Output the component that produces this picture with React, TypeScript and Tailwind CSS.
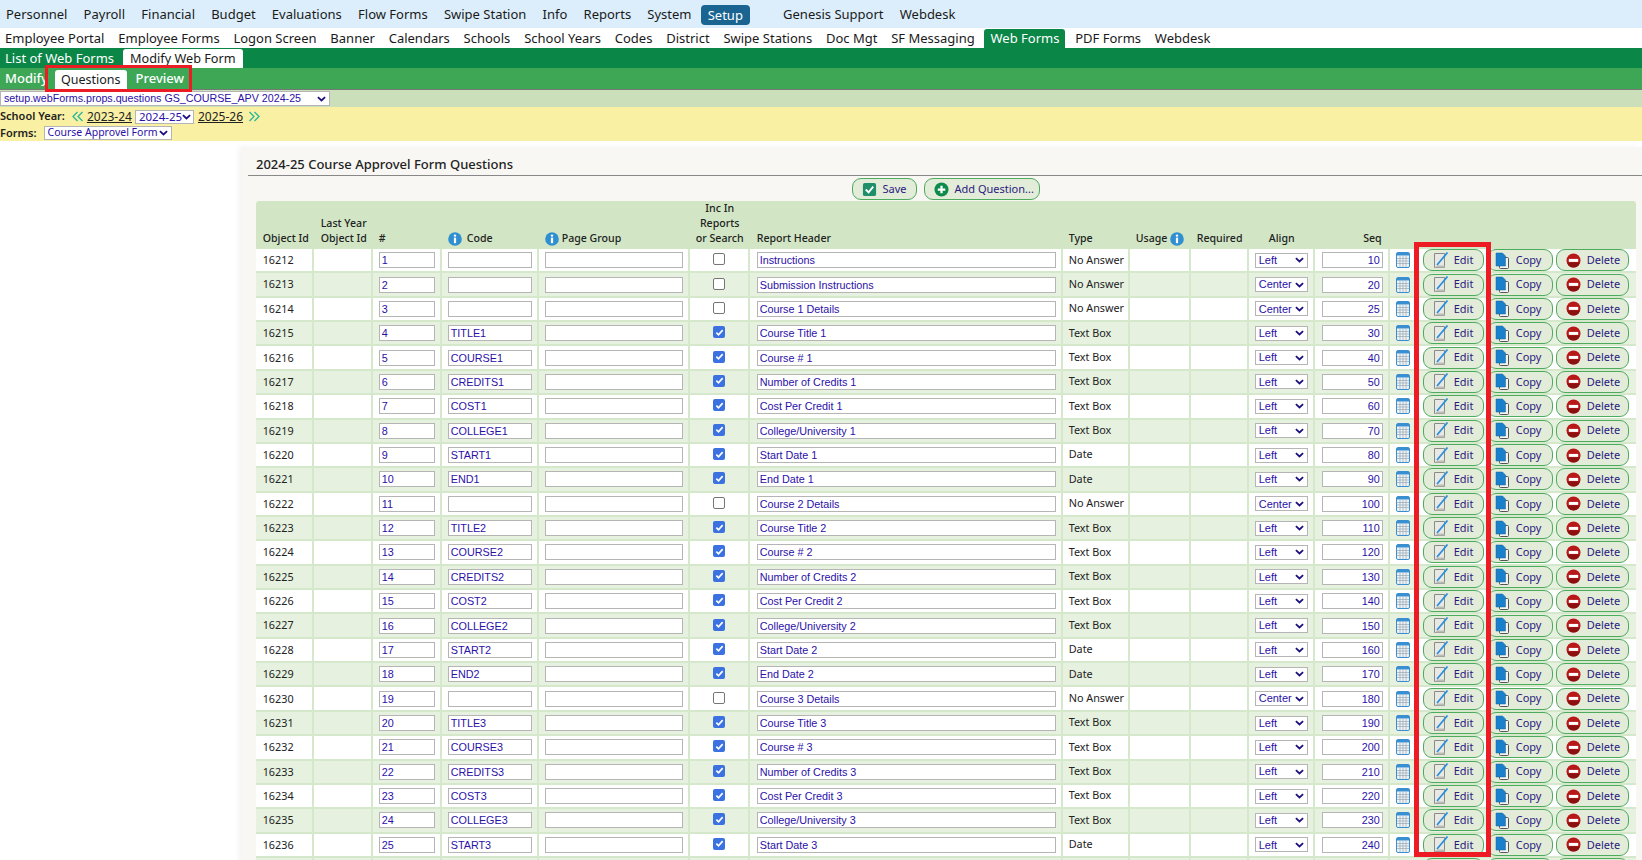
const NAV1 = ["Personnel", "Payroll", "Financial", "Budget", "Evaluations", "Flow Forms", "Swipe Station", "Info", "Reports", "System"];
const NAV2 = ["Employee Portal", "Employee Forms", "Logon Screen", "Banner", "Calendars", "Schools", "School Years", "Codes", "District", "Swipe Stations", "Doc Mgt", "SF Messaging"];

type Row = { id: number; n: number; code: string; header: string; type: string; align: string; seq: number; checked: boolean };

const base = [
  { code: "TITLE", header: "Course Title", type: "Text Box" },
  { code: "COURSE", header: "Course #", type: "Text Box" },
  { code: "CREDITS", header: "Number of Credits", type: "Text Box" },
  { code: "COST", header: "Cost Per Credit", type: "Text Box" },
  { code: "COLLEGE", header: "College/University", type: "Text Box" },
  { code: "START", header: "Start Date", type: "Date" },
  { code: "END", header: "End Date", type: "Date" },
];

const rows: Row[] = [];
const seqs = [10, 20, 25, 30, 40, 50, 60, 70, 80, 90, 100, 110, 120, 130, 140, 150, 160, 170, 180, 190, 200, 210, 220, 230, 240, 250];
const push = (code: string, header: string, type: string, align: string, checked: boolean) => {
  const i = rows.length;
  rows.push({ id: 16212 + i, n: i + 1, code, header, type, align, seq: seqs[i], checked });
};
push("", "Instructions", "No Answer", "Left", false);
push("", "Submission Instructions", "No Answer", "Center", false);
[1, 2, 3].forEach((c) => {
  push("", `Course ${c} Details`, "No Answer", "Center", false);
  base.forEach((b) => push(`${b.code}${c}`, `${b.header} ${c}`, b.type, "Left", true));
});

function InfoIcon() {
  return (
    <svg viewBox="0 0 14 14" className="w-[14px] h-[14px] shrink-0">
      <circle cx="7" cy="7" r="6.8" fill="#2f8fd0" />
      <circle cx="7" cy="3.6" r="1.2" fill="#fff" />
      <rect x="5.9" y="5.6" width="2.2" height="5.6" fill="#fff" />
    </svg>
  );
}

function CalendarIcon() {
  return (
    <svg viewBox="0 0 14 16" className="w-[14px] h-[16px]">
      <rect x="0.5" y="0.5" width="13" height="15" rx="1.5" fill="#eef3f8" stroke="#3a8fd0" />
      <rect x="1" y="1" width="12" height="2.5" fill="#3a8fd0" />
      <path d="M1 6.5h12M1 9h12M1 11.5h12M4 4v11M7 4v11M10 4v11" stroke="#9aa6b2" strokeWidth="0.7" />
    </svg>
  );
}

function EditIcon() {
  return (
    <svg viewBox="0 0 16 17" className="w-[16px] h-[17px] shrink-0">
      <path d="M1.5 1.5h10v14h-10z" fill="#e9e9e4" stroke="#8a8a8a" />
      <path d="M1.5 15.5l3-2h7v2z" fill="#bdbdb8" />
      <path d="M4 13L14.5 0.5" stroke="#2b8fdc" strokeWidth="1.8" />
    </svg>
  );
}

function CopyIcon() {
  return (
    <svg viewBox="0 0 16 17" className="w-[16px] h-[17px] shrink-0">
      <rect x="5.5" y="5.5" width="9" height="11" rx="1" fill="#f4f4f0" stroke="#555" />
      <path d="M2 1h6.5l3 3v10H2z" fill="#1a80cc" stroke="#15679f" strokeWidth="0.5" />
    </svg>
  );
}

function DeleteIcon() {
  return (
    <svg viewBox="0 0 16 16" className="w-[15px] h-[15px] shrink-0">
      <circle cx="8" cy="8" r="7.5" fill="#b81818" />
      <path d="M1.2 10a7 7 0 0 0 13.6 0z" fill="#8c1010" />
      <rect x="3" y="6.3" width="10" height="3.2" fill="#fff" />
    </svg>
  );
}

function ActionBtn({ icon, label, className }: { icon: React.ReactNode; label: string; className: string }) {
  return (
    <button className={`flex items-center h-[22px] rounded-[9px] border border-[#4dab5e] bg-[#e3ecd9] text-[#2b1a80] text-[11px] shrink-0 ${className}`}>
      {icon}
      <span>{label}</span>
    </button>
  );
}

function Chevron() {
  return (
    <svg viewBox="0 0 10 6" className="w-[9px] h-[6px] shrink-0">
      <path d="M1 1l4 3.6L9 1" fill="none" stroke="#1c1080" strokeWidth="2" />
    </svg>
  );
}

function DoubleArrow({ flip }: { flip?: boolean }) {
  return (
    <svg viewBox="0 0 12 11" className={`w-[12px] h-[11px] ${flip ? "rotate-180" : ""}`}>
      <path d="M5.5 1L1 5.5 5.5 10M10.5 1L6 5.5 10.5 10" fill="none" stroke="#25b79a" strokeWidth="1.3" />
    </svg>
  );
}

function Select({ value, className }: { value: string; className: string }) {
  return (
    <div className={`flex items-center justify-between border border-[#b5b5b5] bg-white text-[#2b0fa8] pl-[3px] pr-[3px] ${className}`}>
      <span className="whitespace-nowrap">{value}</span>
      <Chevron />
    </div>
  );
}

const GRID = "grid grid-cols-[58px_59px_69px_97px_151px_60px_313px_67px_61px_58px_66px_75px_246px]";
const TEXT_INPUT = "h-[16px] border border-[#b5b5b5] bg-white text-[#2b0fa8] font-['Liberation_Sans',sans-serif] text-[10.8px] leading-[14px] px-[2px] overflow-hidden whitespace-nowrap";

function TableRow({ row, shaded }: { row: Row; shaded: boolean }) {
  const cell = "h-[24.37px] border-r-2 border-b-2 border-[#d6e8cb] flex items-center";
  return (
    <div className={`${GRID} ${shaded ? "bg-[#e6f1df]" : "bg-white"} text-[10.8px] text-[#222]`}>
      <div className={`${cell} pl-[7px]`}>{row.id}</div>
      <div className={cell}></div>
      <div className={`${cell} pl-[6px]`}><div className={`${TEXT_INPUT} w-[56px]`}>{row.n}</div></div>
      <div className={`${cell} pl-[6px]`}><div className={`${TEXT_INPUT} w-[84px]`}>{row.code}</div></div>
      <div className={`${cell} pl-[6px]`}><div className={`${TEXT_INPUT} w-[138px]`}></div></div>
      <div className={`${cell} justify-center pl-[1px] pb-[2px]`}>
        {row.checked ? (
          <div className="w-[12px] h-[12px] rounded-[2px] bg-[#3b71e0] flex items-center justify-center">
            <svg viewBox="0 0 10 10" className="w-[9px] h-[9px]"><path d="M1.5 5.2l2.4 2.4L8.5 2.4" fill="none" stroke="#fff" strokeWidth="1.8" /></svg>
          </div>
        ) : (
          <div className="w-[12px] h-[12px] rounded-[2px] border border-[#767676] bg-white"></div>
        )}
      </div>
      <div className={`${cell} pl-[7px]`}><div className={`${TEXT_INPUT} w-[299px]`}>{row.header}</div></div>
      <div className={`${cell} pl-[6px] pb-[1px]`}>{row.type}</div>
      <div className={cell}></div>
      <div className={cell}></div>
      <div className={`${cell} pl-[6px]`}>
        <Select value={row.align} className="w-[53px] h-[15px] text-[11px] font-['Liberation_Sans',sans-serif]" />
      </div>
      <div className={`${cell} pl-[7px]`}><div className={`${TEXT_INPUT} w-[61px] text-right`}>{row.seq}</div></div>
      <div className="h-[24.37px] border-b-2 border-[#d6e8cb] flex items-center pl-[6px] gap-[3px]">
        <div className="mr-[10px] flex"><CalendarIcon /></div>
        <ActionBtn icon={<EditIcon />} label="Edit" className="w-[61px] gap-[5px] pl-[9px]" />
        <ActionBtn icon={<CopyIcon />} label="Copy" className="w-[66px] gap-[6px] pl-[6px]" />
        <ActionBtn icon={<DeleteIcon />} label="Delete" className="w-[73px] gap-[6px] pl-[9px]" />
      </div>
    </div>
  );
}

export default function App() {
  return (
    <div className="relative h-screen overflow-hidden bg-white font-['Noto_Sans',sans-serif]">
      {/* Menus */}
      <div className="h-[28px] bg-[#dceefb] flex items-center pl-[6px] pt-[2px] gap-[16.2px] text-[13px] text-[#1a1a1a]">
        {NAV1.map((n) => <span key={n}>{n}</span>)}
        <span className="bg-[#1a6491] text-white rounded-[4px] px-[7px] h-[20px] leading-[20px] -ml-[7px]">Setup</span>
        <span className="ml-[17px]">Genesis Support</span>
        <span>Webdesk</span>
      </div>
      <div className="h-[20px] bg-white flex items-center pl-[5px] pt-[1px] gap-[13.8px] text-[13px] text-[#1a1a1a]">
        {NAV2.map((n) => <span key={n}>{n}</span>)}
        <span className="bg-[#0a8647] text-white rounded-t-[3px] px-[6px] h-[19px] leading-[19px] self-end -mx-[4px]">Web Forms</span>
        <span>PDF Forms</span>
        <span>Webdesk</span>
      </div>
      <div className="h-[20px] bg-[#0a8647] flex items-end pl-[5px] text-[13px] text-white">
        <span className="h-[20px] leading-[20px] mr-[9px]">List of Web Forms</span>
        <span className="bg-white text-[#1a1a1a] rounded-t-[3px] px-[7px] h-[19px] leading-[19px] text-[12.7px]">Modify Web Form</span>
      </div>
      <div className="h-[21px] bg-[#3da756] flex items-end pl-[5px] text-[13px] text-white font-medium">
        <span className="h-[21px] leading-[21px] w-[50px]">Modify</span>
        <span className="bg-white text-[#1a1a1a] font-normal rounded-t-[3px] px-[6px] h-[19px] leading-[19px] text-[12.5px]">Questions</span>
        <span className="h-[21px] leading-[21px] ml-[9px]">Preview</span>
      </div>
      <div className="h-[18px] bg-[#cbdfba] border-t border-[#777] flex items-center">
        <Select value="setup.webForms.props.questions GS_COURSE_APV 2024-25" className="w-[330px] h-[15px] text-[10.7px] font-['Liberation_Sans',sans-serif]" />
      </div>
      <div className="h-[34px] bg-[#f9f0a3] text-[11px] text-[#222] pt-[1px]">
        <div className="flex items-center h-[17px] whitespace-nowrap">
          <b className="font-semibold">School Year:</b>
          <span className="ml-[7px] flex"><DoubleArrow /></span>
          <span className="underline ml-[3px] text-[12px]">2023-24</span>
          <Select value="2024-25" className="w-[59px] h-[14px] ml-[3px] text-[11.5px]" />
          <span className="underline ml-[4px] text-[12px]">2025-26</span>
          <span className="ml-[5px] flex"><DoubleArrow flip /></span>
        </div>
        <div className="flex items-center h-[16px]">
          <b className="font-semibold">Forms:</b>
          <Select value="Course Approvel Form" className="w-[128px] h-[14px] ml-[7px] text-[10.5px]" />
        </div>
      </div>

      {/* Content panel */}
      <div className="ml-[242px] mt-[6px] h-[720px] bg-[#f8f7f3] shadow-[-3px_0_6px_rgba(0,0,0,0.05)]">
        <div className="ml-[6px] h-[29px] border-b border-[#888] flex items-end">
          <h1 className="ml-[8px] mb-[1px] text-[13px] font-medium text-[#222]">2024-25 Course Approvel Form Questions</h1>
        </div>
        <div className="h-[24px] flex items-end justify-center gap-[7px] pl-[7px]">
          <ActionBtn icon={<svg viewBox="0 0 16 16" className="w-[15px] h-[15px]"><rect x="1" y="1" width="14" height="14" rx="2" fill="#1f8f6a" /><path d="M4 8l3 3 5-6" fill="none" stroke="#fff" strokeWidth="2" /></svg>} label="Save" className="w-[65px] gap-[6px] pl-[9px]" />
          <ActionBtn icon={<svg viewBox="0 0 16 16" className="w-[15px] h-[15px]"><circle cx="8" cy="8" r="7.5" fill="#0d8a4c" /><path d="M8 4v8M4 8h8" stroke="#fff" strokeWidth="2.4" /></svg>} label="Add Question..." className="w-[116px] gap-[6px] pl-[9px]" />
        </div>
        <div className="ml-[13.7px] w-[1380px] mt-[1px]">
          <div className={`${GRID} bg-[#d2e6c5] rounded-t-[3px] h-[48px] text-[10.6px] font-medium text-[#222] items-end pb-[6px] leading-[15px]`}>
            <div className="pl-[7px]">Object Id</div>
            <div className="pl-[7px]">Last Year<br />Object Id</div>
            <div className="pl-[6px]">#</div>
            <div className="pl-[6px] flex items-center gap-[5px]"><InfoIcon />Code</div>
            <div className="pl-[6px] flex items-center gap-[3px]"><InfoIcon />Page Group</div>
            <div className="text-center">Inc In<br />Reports<br />or Search</div>
            <div className="pl-[7px]">Report Header</div>
            <div className="pl-[6px]">Type</div>
            <div className="pl-[6px] flex items-center gap-[3px]">Usage<InfoIcon /></div>
            <div className="pl-[6px]">Required</div>
            <div className="text-center">Align</div>
            <div className="text-right pr-[8px]">Seq</div>
            <div></div>
          </div>
          {rows.map((r, i) => <TableRow key={r.id} row={r} shaded={i % 2 === 1} />)}
        </div>
      </div>

      {/* Red annotation boxes */}
      <div className="absolute left-[45px] top-[65px] w-[147px] h-[27px] border-[3px] border-[#ed1c24]"></div>
      <div className="absolute left-[1414px] top-[242px] w-[77px] h-[615px] border-[5px] border-[#ed1c24]"></div>
    </div>
  );
}
